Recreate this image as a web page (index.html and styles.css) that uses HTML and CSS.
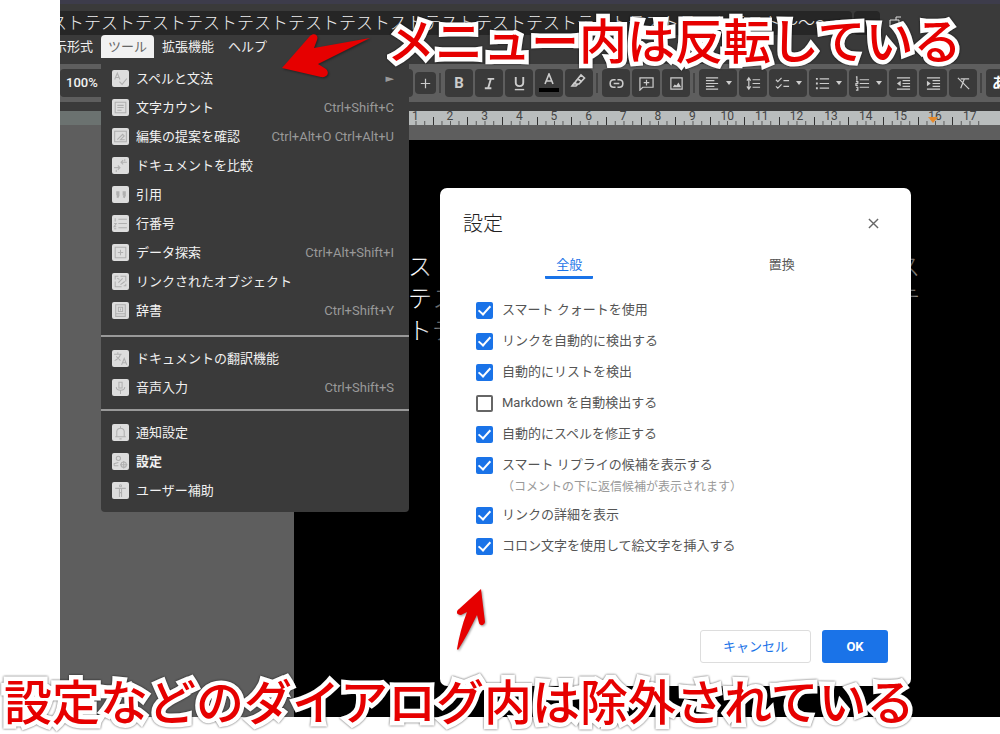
FILE: index.html
```html
<!DOCTYPE html>
<html lang="ja">
<head>
<meta charset="utf-8">
<title>設定</title>
<link rel="stylesheet" href="styles.css">
</head>
<body>
<div class="editor">
  <header class="topbar">
    <div class="titlebar">
      <div class="doc-title">ストテストテストテストテストテストテストストテストテストテストテストテストテストテスト～～～～（</div>
      <div class="title-extra"></div>
      <svg class="title-icon" viewBox="0 0 14 14" fill="none" stroke="#ddd"><path d="M2 4h9v7H2zM8 4V1h5"/></svg>
    </div>
    <nav class="menubar">
      <button class="menu-name clipped"><span>示形式</span></button>
      <div class="menu-anchor">
        <button class="menu-name active">ツール</button>
        <div class="dropdown">
          <ul class="group">
            <li><button class="item"><svg class="mi" viewBox="0 0 16 16"><path d="M2.500 9 5 3l2.500 6M3.500 7h3M7 11l2.500 2.500L14 8"/></svg><span>スペルと文法</span><span class="sub">►</span></button></li>
            <li><button class="item"><svg class="mi" viewBox="0 0 16 16"><path d="M3 3h10v10H3zM5 6h6M5 8h6M5 10.500h4"/></svg><span>文字カウント</span><kbd>Ctrl+Shift+C</kbd></button></li>
            <li><button class="item"><svg class="mi" viewBox="0 0 16 16"><path d="M2.500 3h11v10h-11zM5 11l5-5 1.500 1.500L8 11h4"/></svg><span>編集の提案を確認</span><kbd>Ctrl+Alt+O Ctrl+Alt+U</kbd></button></li>
            <li><button class="item"><svg class="mi" viewBox="0 0 16 16"><path d="M14 5H8.500M10.500 3 8.500 5l2 2M2 10h5.500M5.500 8l2 2-2 2M12 2v2M4 12v2"/></svg><span>ドキュメントを比較</span></button></li>
            <li><button class="item"><svg class="mi" viewBox="0 0 16 16"><path d="M4 6h2v3l-1 2M5 6v3M10 6h2v3l-1 2M11 6v3" stroke-width="2"/></svg><span>引用</span></button></li>
            <li><button class="item"><svg class="mi" viewBox="0 0 16 16"><path d="M3 3v3M2 8h2l-2 3h2M2 13h2M6 4h8M6 8h8M6 12h8"/></svg><span>行番号</span></button></li>
            <li><button class="item"><svg class="mi" viewBox="0 0 16 16"><path d="M3 3h10v10H3zM8 5.500v5M5.500 8h5"/></svg><span>データ探索</span><kbd>Ctrl+Alt+Shift+I</kbd></button></li>
            <li><button class="item"><svg class="mi" viewBox="0 0 16 16"><path d="M8 3h5v5M3 8v5h6M3 6V3h3M6 9l4-4M8 11l4-3M5 5l2 1M11 12h2v-2"/></svg><span>リンクされたオブジェクト</span></button></li>
            <li><button class="item"><svg class="mi" viewBox="0 0 16 16"><path d="M3.500 2.500h9v11h-9zM3.500 11h9M6 5h4v4H6zM8 6v2"/></svg><span>辞書</span><kbd>Ctrl+Shift+Y</kbd></button></li>
          </ul>
          <ul class="group">
            <li><button class="item"><svg class="mi" viewBox="0 0 16 16"><path d="M2 4h7M5.500 2v2M8 4c-1 3-3 5-5.500 6M4 6l4 4M9 14l2.500-6 2.500 6M10 12h3"/></svg><span>ドキュメントの翻訳機能</span></button></li>
            <li><button class="item"><svg class="mi" viewBox="0 0 16 16"><path d="M6.500 3h3v5.500h-3zM4 7.500c0 4 8 4 8 0M8 11v3"/></svg><span>音声入力</span><kbd>Ctrl+Shift+S</kbd></button></li>
          </ul>
          <ul class="group">
            <li><button class="item"><svg class="mi" viewBox="0 0 16 16"><path d="M4.500 12V7C5 3 11 3 11.500 7v5M3 12h10M8 2v2M7 14h2"/></svg><span>通知設定</span></button></li>
            <li><button class="item chosen"><svg class="mi" viewBox="0 0 16 16"><circle cx="6" cy="5" r="2"/><path d="M2 12v-2l4-1M2 12h4"/><circle cx="11" cy="11" r="2.500"/><path d="M11 7.500v7M7.500 11h7"/></svg><span>設定</span></button></li>
            <li><button class="item"><svg class="mi" viewBox="0 0 16 16"><circle cx="8" cy="3.500" r="1"/><path d="M3 6h10M7 6v8M9 6v8M7 10h2"/></svg><span>ユーザー補助</span></button></li>
          </ul>
        </div>
      </div>
      <button class="menu-name">拡張機能</button>
      <button class="menu-name help">ヘルプ</button>
    </nav>
  </header>

  <div class="toolbar">
    <div class="zoom-field">100%</div>
    <button class="tool plus" aria-label="拡大"><svg viewBox="0 0 16 16"><path d="M8 3v10M3 8h10"/></svg></button>
    <i class="sep"></i>
    <button class="tool" aria-label="太字"><b>B</b></button>
    <button class="tool" aria-label="斜体"><svg viewBox="0 0 16 16"><path d="M6 3h7M3 13h7M9.500 3l-3 10" stroke-width="2"/></svg></button>
    <button class="tool" aria-label="下線"><svg viewBox="0 0 16 16"><path d="M4 1v6c0 5 8 5 8 0V1" stroke-width="2"/><path d="M3 14.500h10" stroke-width="1.500"/></svg></button>
    <button class="tool tall" aria-label="文字色"><svg viewBox="0 0 20 20"><path d="M6 11l4-10 4 10M7.500 8h5" stroke-width="1.600"/><path d="M0 17h20" stroke="#000" stroke-width="4"/></svg></button>
    <button class="tool tall" aria-label="ハイライト"><svg viewBox="0 0 20 20"><path d="M7 8l5-6 3.500 3L10 11H6zM9 6l4 3M6 9l-3 4h4l2-2" stroke-width="1.600"/></svg></button>
    <i class="sep"></i>
    <button class="tool" aria-label="リンク"><svg viewBox="0 0 16 16"><path d="M7 4H5C0 4 0 12 5 12h2M9 4h2c5 0 5 8 0 8H9M5 8h6" stroke-width="1.700"/></svg></button>
    <button class="tool" aria-label="コメント"><svg viewBox="0 0 16 16"><path d="M1 15V2h14v10H4zM8 4v6M5 7h6"/></svg></button>
    <button class="tool" aria-label="画像"><svg viewBox="0 0 16 16"><path d="M2 2h12v12H2z"/><path d="M4 12l2-3 2 1 2-3 3 5z" fill="#ccc" stroke="none"/></svg></button>
    <i class="sep"></i>
    <button class="tool wide" aria-label="配置"><svg viewBox="0 0 16 16"><path d="M1 2h13M1 5h9M1 8h13M1 11h9M1 14h13"/></svg><i class="caret"></i></button>
    <button class="tool" aria-label="行間隔"><svg viewBox="0 0 16 16"><path d="M3 3v10M1 5l2-3 2 3M1 11l2 3 2-3M7 4h8M7 8h8M7 12h8"/></svg></button>
    <button class="tool wide" aria-label="チェックリスト"><svg viewBox="0 0 16 16"><path d="M1 4l2 2 4-4M1 11l2 2 4-4M9 5h6M9 11h6"/></svg><i class="caret"></i></button>
    <button class="tool wide" aria-label="箇条書き"><svg viewBox="0 0 16 16"><path d="M1 3h2M1 8h2M1 13h2" stroke-width="2"/><path d="M5 3h10M5 8h10M5 13h10"/></svg><i class="caret"></i></button>
    <button class="tool wide" aria-label="番号付きリスト"><svg viewBox="0 0 16 16"><path d="M1 1h1v4M1 6h2v2H1v2h2M1 12h2v3H1M5 4h10M5 8h10M5 12h10"/></svg><i class="caret"></i></button>
    <button class="tool" aria-label="インデント減"><svg viewBox="0 0 16 16"><path d="M1 2h14M7 5h8M7 8h8M7 11h8M1 14h14"/><path d="M5 5v6L1 8z" fill="#ccc" stroke="none"/></svg></button>
    <button class="tool" aria-label="インデント増"><svg viewBox="0 0 16 16"><path d="M1 2h14M7 5h8M7 8h8M7 11h8M1 14h14"/><path d="M1 5v6l4-3z" fill="#ccc" stroke="none"/></svg></button>
    <button class="tool" aria-label="書式をクリア"><svg viewBox="0 0 16 16"><path d="M2 2l12 12M5 3h9M9 3 5 13"/></svg></button>
    <i class="sep"></i>
    <button class="tool ime">あ</button>
  </div>

  <div class="ruler">
    <div class="scale"><span>1</span><span>2</span><span>3</span><span>4</span><span>5</span><span>6</span><span>7</span><span>8</span><span>9</span><span>10</span><span>11</span><span>12</span><span>13</span><span>14</span><span>15</span><span class="marked">16</span><span>17</span></div>
  </div>

  <main class="workspace">
    <article class="page">
      <p>ストテストテストストテストテストテストテス</p>
      <p>テストテストテストテストテストテストステテ</p>
      <p>トテストテスト</p>
    </article>
    <section class="dialog" role="dialog" aria-labelledby="dlg-title">
      <div class="dialog-head">
        <h1 id="dlg-title">設定</h1>
        <button class="close" aria-label="閉じる"><svg viewBox="0 0 12 12"><path d="M1 1l10 10M11 1 1 11"/></svg></button>
      </div>
      <div class="tabs"><button class="tab on">全般</button><button class="tab">置換</button></div>
      <div class="options">
        <label><input type="checkbox" checked><span>スマート クォートを使用</span></label>
        <label><input type="checkbox" checked><span>リンクを自動的に検出する</span></label>
        <label><input type="checkbox" checked><span>自動的にリストを検出</span></label>
        <label><input type="checkbox"><span>Markdown を自動検出する</span></label>
        <label><input type="checkbox" checked><span>自動的にスペルを修正する</span></label>
        <label class="noted"><input type="checkbox" checked><span>スマート リプライの候補を表示する<small>（コメントの下に返信候補が表示されます）</small></span></label>
        <label><input type="checkbox" checked><span>リンクの詳細を表示</span></label>
        <label><input type="checkbox" checked><span>コロン文字を使用して絵文字を挿入する</span></label>
      </div>
      <div class="actions"><button class="cancel">キャンセル</button><button class="ok">OK</button></div>
    </section>
  </main>
</div>

<svg class="arrow arrow-menu" viewBox="0 0 92 48"><path d="M2 37 30 5c4-4 9-1 7 4L34 17 90 7 38 33l8 5c4 4 1 9-5 8z"/></svg>
<svg class="arrow arrow-dialog" viewBox="0 0 32 64"><path d="M27 2 31 35c-1 4-5 4-6 1L23 28C17 40 11 52 4 63L3 62C5 50 8 38 13 25L7 28c-5 0-5-4-2-6z"/></svg>
<p class="caption caption-menu">メニュー内は反転している</p>
<p class="caption caption-dialog">設定などのダイアログ内は除外されている</p>
</body>
</html>
```
FILE: styles.css
```css
* { box-sizing: border-box; }
body {
  margin: 0;
  background: #fff;
  position: relative;
  overflow: hidden;
  font: 13px/20px Roboto, "Noto Sans CJK JP", sans-serif;
}
button { font: inherit; color: inherit; border: 0; padding: 0; background: none; white-space: nowrap; }
ul { list-style: none; margin: 0; padding: 0; }

.editor {
  margin: 0 0 17px 60px;
  min-height: calc(100vh - 17px);
  display: flex;
  flex-direction: column;
  background: #5e5e5e;
  overflow: hidden;
}
.topbar { background: #3a3a3a; border-top: 4px solid #3d3c4b; padding-top: 7px; height: 64px; }
.titlebar { display: flex; gap: 2px; align-items: center; height: 24px; }
.doc-title {
  flex: none;
  width: 792px;
  height: 24px;
  overflow: hidden;
  white-space: nowrap;
  background: #262626;
  border-radius: 0 4px 4px 0;
  color: #eee;
  font: 300 17px/22px "Noto Sans CJK JP", sans-serif;
  text-indent: -10px;
}
.title-extra { width: 26px; height: 24px; background: #262626; border-radius: 4px; }
.title-icon { width: 14px; height: 14px; margin-left: 6px; }
.menubar { display: flex; height: 23px; color: #eee; }
.menu-name { height: 23px; padding: 0 8px; line-height: 23px; }
.menu-name.active { background: #f1f1f1; color: #666; border-radius: 4px 4px 0 0; width: 53px; padding: 0; }
.menu-name.clipped { width: 41px; padding: 0 8px 0 0; overflow: hidden; display: flex; justify-content: flex-end; }
.menu-name.help { padding-left: 6px; }
.menu-anchor { position: relative; }

.dropdown {
  position: absolute;
  z-index: 2;
  top: 100%;
  left: 0;
  width: 308px;
  background: #3a3a3a;
  border-radius: 0 0 4px 4px;
  color: #f1f1f1;
}
.group { padding: 6px 0 10px; }
.group + .group { border-top: 2px solid #999; padding: 7px 0; }
.item { display: flex; align-items: center; width: 100%; height: 29px; padding: 0 15px 0 11px; gap: 7px; text-align: left; }
.item kbd, .sub { margin-left: auto; font: 13px/20px Roboto, sans-serif; color: #999; }
.sub { font: 11px/20px "DejaVu Sans", sans-serif; }
.chosen { font-weight: 700; }
.mi { flex: none; width: 17px; height: 17px; background: #ddd; border-radius: 2px; fill: none; stroke: #b0b0b0; }

.toolbar { display: flex; align-items: center; gap: 2px; height: 38px; background: #5e5e5e; }
.zoom-field {
  flex: none;
  width: 353px;
  height: 28px;
  padding-left: 6px;
  background: #3a3a3a;
  border-radius: 4px;
  color: #f1f1f1;
  font-weight: 500;
  line-height: 28px;
}
.tool {
  flex: none;
  width: 28px;
  height: 28px;
  display: flex;
  align-items: center;
  justify-content: center;
  gap: 6px;
  background: #3a3a3a;
  border-radius: 4px;
  color: #ccc;
  font-size: 15px;
}
.tool svg { width: 15px; height: 15px; fill: none; stroke: #ccc; stroke-width: 1.3; }
.tool.tall svg { width: 20px; height: 20px; }
.tool.plus { width: 21px; height: 22px; }
.tool.wide { width: 38px; }
.tool.ime { color: #fff; font-weight: 700; width: 32px; justify-content: flex-start; padding-left: 6px; }
.sep { flex: none; width: 2px; height: 20px; margin: 0 2px 0 1px; background: #444; }
.caret { border: 3px solid transparent; border-top: 4px solid #ccc; border-bottom: 0; }

.ruler {
  height: 23px;
  border-top: 9px solid #3a3a3a;
  background: linear-gradient(90deg, #6b7270 234px, #b9bdbd 234px);
}
.scale { display: grid; grid-template-columns: repeat(17, 1fr); margin: 0 13px 0 338px; }
.scale span {
  position: relative;
  height: 14px;
  text-align: center;
  font: 12px/10px Roboto, sans-serif;
  color: #444;
  background:
    linear-gradient(#333, #333) 0 100% / 1px 8px no-repeat,
    linear-gradient(90deg, #555 1px, transparent 1px) 0 100% / 25% 4px repeat-x;
}
.marked::after {
  content: "";
  position: absolute;
  left: 10px;
  top: 6px;
  border: 5px solid transparent;
  border-top: 6px solid #e58a2c;
  border-bottom: 0;
}

.workspace { flex: 1; position: relative; padding: 15px 0 0 234px; display: flex; }
.page { flex: 1; background: #000; padding: 109px 80px 0 114px; color: #fff; }
.page p { margin: 0; font: 300 24px/32px "Noto Sans CJK JP", sans-serif; text-align-last: justify; white-space: nowrap; }
.page p:last-child { text-align-last: left; }

.dialog {
  position: absolute;
  left: 380px;
  right: 89px;
  top: 63px;
  padding: 23px;
  background: #fff;
  border-radius: 7px;
  box-shadow: 0 0 16px 8px rgba(0, 0, 0, .75);
  color: #555;
}
.dialog-head { display: flex; justify-content: space-between; align-items: center; }
.dialog h1 { margin: 0; font: 300 20px/24px "Noto Sans CJK JP", sans-serif; color: #222; }
.close { width: 30px; height: 24px; display: grid; place-items: center; }
.close svg { width: 11px; height: 11px; fill: none; stroke: #666; stroke-width: 1.5; }
.tabs { display: grid; grid-template-columns: 1fr 1fr; justify-items: center; margin-top: 18px; }
.tab { width: 48px; height: 26px; line-height: 24px; padding-bottom: 2px; }
.tab.on { color: #1a73e8; border-bottom: 3px solid #1a73e8; border-radius: 1px; }
.options { display: grid; gap: 11px; padding: 21px 12px 0 13px; }
.options label { display: flex; align-items: flex-start; gap: 9px; }
.options .noted { margin-bottom: -5px; }
.options small { display: block; font-size: 12px; line-height: 24px; color: #999; }
.options input {
  appearance: none;
  flex: none;
  width: 17px;
  height: 17px;
  margin: 2px 0 0;
  border: 2px solid #666;
  border-radius: 2px;
  display: grid;
  place-items: center;
}
.options input:checked { background: #1a73e8; border-color: #1a73e8; }
.options input:checked::after {
  content: "";
  width: 5px;
  height: 10px;
  margin-top: -3px;
  border: solid #fff;
  border-width: 0 2px 2px 0;
  transform: rotate(42deg);
}
.actions { display: flex; justify-content: flex-end; gap: 11px; margin-top: 74px; }
.actions button { height: 33px; border-radius: 3px; }
.cancel { width: 111px; border: 1px solid #ddd; color: #1a73e8; }
.ok { width: 66px; background: #1a73e8; color: #fff; font-weight: 700; }

.arrow { position: absolute; z-index: 3; fill: #e60000; filter: drop-shadow(1px 1px 1px #0006); }
.arrow-menu { left: 280px; top: 31px; width: 92px; height: 48px; }
.arrow-dialog { left: 454px; top: 587px; width: 32px; height: 64px; }
.caption {
  position: absolute;
  z-index: 4;
  margin: 0;
  font: 500 48px/56px "Noto Sans CJK JP", sans-serif;
  color: #e60000;
  white-space: nowrap;
  -webkit-text-stroke: 9px #fff;
  paint-order: stroke fill;
  filter: drop-shadow(0 0 1px #000a);
}
.caption-menu { left: 387px; top: 10px; }
.caption-dialog { left: 4px; top: 671px; }
```
